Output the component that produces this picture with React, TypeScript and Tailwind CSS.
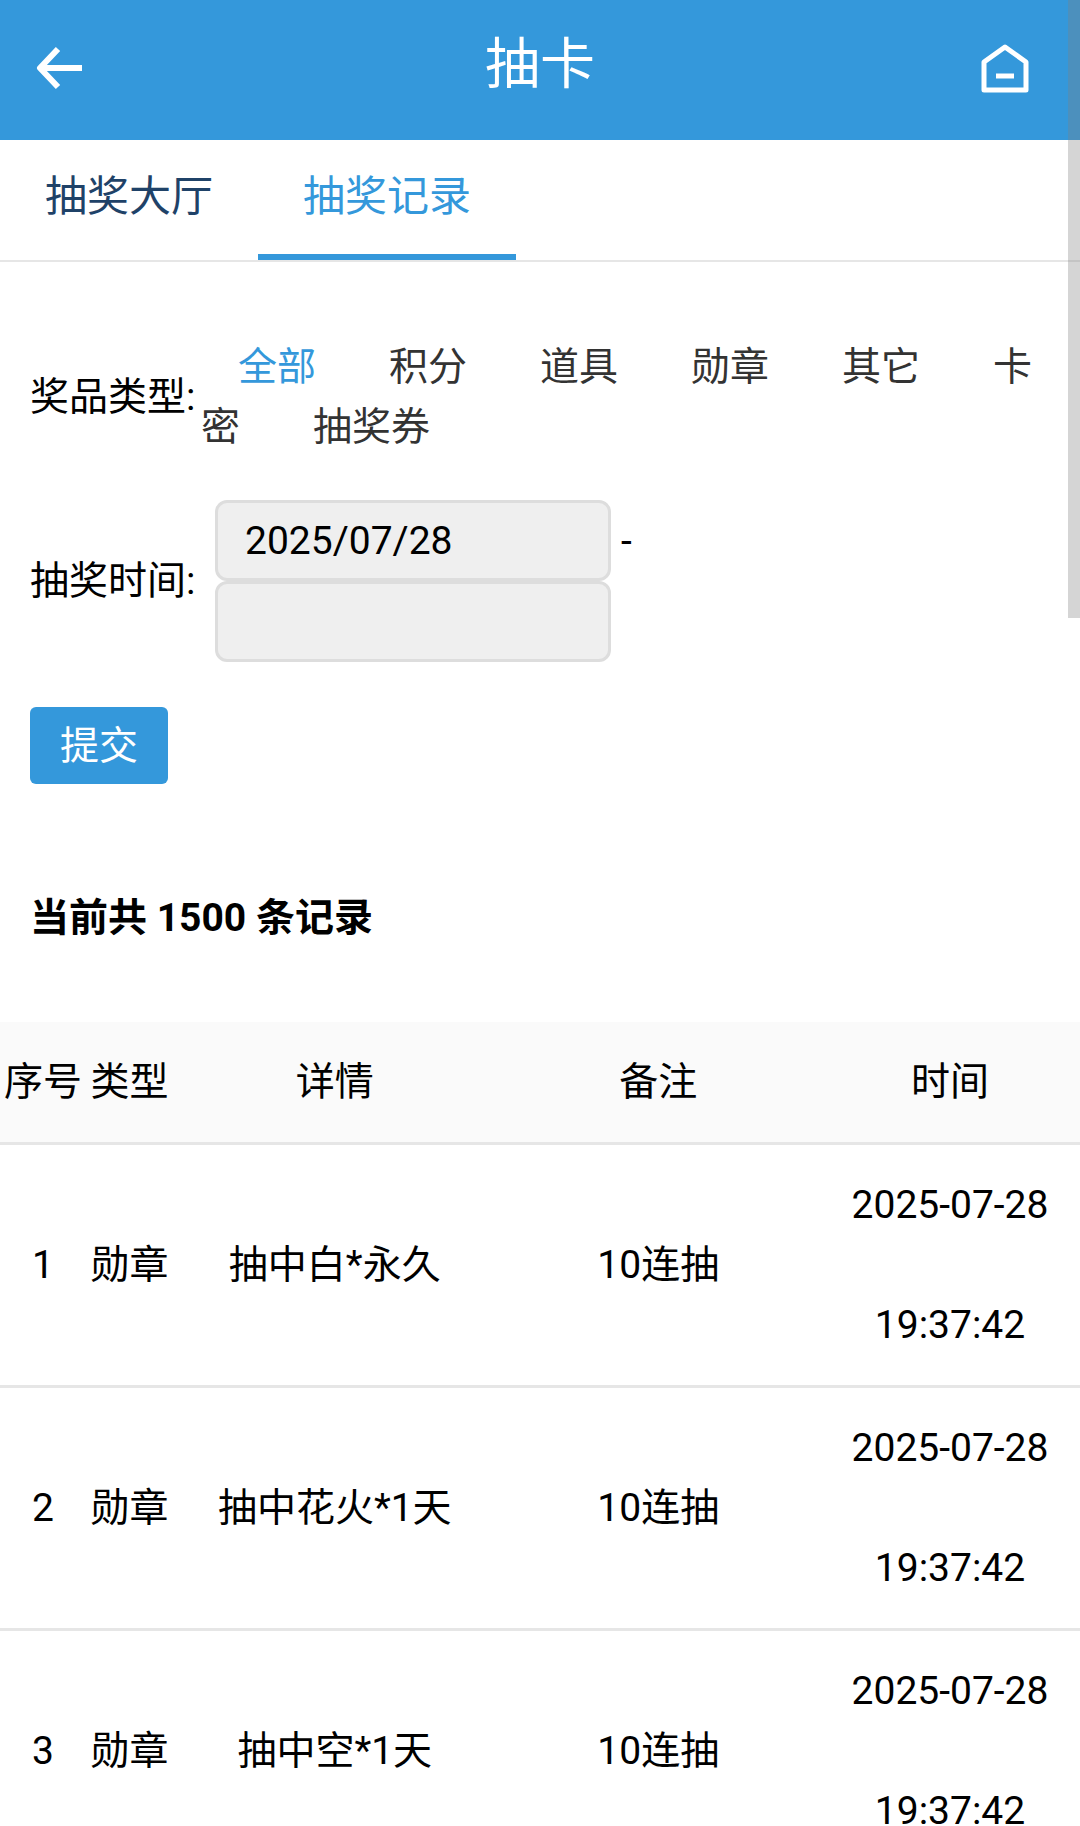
import { useState } from 'react';
import clsx from 'clsx';

const tabs = [
  { href: '#hall', title: '抽奖大厅' },
  { href: '#records', title: '抽奖记录' },
];

const prizeTypes = ['全部', '积分', '道具', '勋章', '其它', '卡密', '抽奖券'];

const records = [
  { id: 1, type: '勋章', detail: '抽中白*永久', note: '10连抽', date: '2025-07-28', time: '19:37:42' },
  { id: 2, type: '勋章', detail: '抽中花火*1天', note: '10连抽', date: '2025-07-28', time: '19:37:42' },
  { id: 3, type: '勋章', detail: '抽中空*1天', note: '10连抽', date: '2025-07-28', time: '19:37:42' },
];

const dateInput =
  'block h-[81px] w-[396px] rounded-xl border-3 border-[#dddddd] bg-[#efefef] px-[27px] text-[39px] text-black outline-none';

function BackIcon() {
  return (
    <svg width="50" height="48" viewBox="0 0 50 48" fill="none" stroke="currentColor" strokeWidth="6">
      <path d="M48 24H6M24 5L6 24l18 19" strokeLinejoin="round" />
    </svg>
  );
}

function HomeIcon() {
  return (
    <svg width="50" height="50" viewBox="0 0 50 50" fill="none" stroke="currentColor" strokeWidth="5">
      <path d="M4 19L25 4l21 15v28H4z" strokeLinejoin="round" />
      <path d="M16 33h18" />
    </svg>
  );
}

function Header() {
  return (
    <header className="grid h-[140px] grid-cols-[1fr_auto_1fr] items-center bg-[#3498db] px-[34px] pb-1 text-white">
      <a href="#back" aria-label="返回" className="justify-self-start">
        <BackIcon />
      </a>
      <h1 className="pb-2 text-[55px] leading-[80px]">抽卡</h1>
      <a href="#home" aria-label="首页" className="justify-self-end pr-4">
        <HomeIcon />
      </a>
    </header>
  );
}

function Filters() {
  const [type, setType] = useState('全部');

  return (
    <form className="px-[30px] pt-[75px]" onSubmit={(e) => e.preventDefault()}>
      <div className="flex items-center">
        <span className="w-[171px] shrink-0">奖品类型:</span>
        <div className="leading-[60px] text-[#333333]">
          {prizeTypes.map((item) => (
            <a
              key={item}
              href="#records"
              onClick={() => setType(item)}
              className={clsx('mr-9 ml-[37px]', item === type && 'text-[#3498db]')}
            >
              {item}
            </a>
          ))}
        </div>
      </div>

      <div className="mt-[43px] flex items-center">
        <label htmlFor="start" className="w-[185px] shrink-0">
          抽奖时间:
        </label>
        <div>
          <div className="flex items-center gap-[10px]">
            <input id="start" className={dateInput} defaultValue="2025/07/28" />
            <span>-</span>
          </div>
          <input aria-label="结束时间" className={dateInput} />
        </div>
      </div>

      <button type="submit" className="mt-[45px] block h-[77px] rounded-md bg-[#3498db] px-[30px] text-white">
        提交
      </button>
    </form>
  );
}

function RecordTable() {
  return (
    <table className="w-full table-fixed border-collapse text-center leading-[120px]">
      <colgroup>
        <col className="w-[86px]" />
        <col className="w-[87px]" />
        <col />
        <col />
        <col className="w-[260px]" />
      </colgroup>
      <thead>
        <tr className="border-b-3 border-[#e6e6e6] bg-[#fafafa]">
          {['序号', '类型', '详情', '备注', '时间'].map((title) => (
            <th key={title} className="p-0 font-normal">
              {title}
            </th>
          ))}
        </tr>
      </thead>
      <tbody>
        {records.map((row) => (
          <tr key={row.id} className="border-b-3 border-[#e6e6e6]">
            <td className="p-0">{row.id}</td>
            <td className="p-0">{row.type}</td>
            <td className="p-0">{row.detail}</td>
            <td className="p-0">{row.note}</td>
            <td className="p-0">
              {row.date}
              <br />
              {row.time}
            </td>
          </tr>
        ))}
      </tbody>
    </table>
  );
}

export default function App() {
  return (
    <div className="relative h-screen overflow-hidden bg-white font-[Roboto,'Noto_Sans_CJK_SC',sans-serif] text-[39px] leading-[60px] text-black">
      <main lang="zh-CN" className="h-full overflow-y-auto [scrollbar-width:none]">
        <Header />
        <nav className="flex border-b-2 border-[#e6e6e6] text-[42px] leading-[114px]">
          {tabs.map(({ href, title }, i) => (
            <a
              key={href}
              href={href}
              className={clsx(
                'border-b-6 px-[45px]',
                i === 1 ? 'border-[#3498db] text-[#3498db]' : 'border-transparent text-[#1f4268]'
              )}
            >
              {title}
            </a>
          ))}
        </nav>
        <Filters />
        <h2 className="mt-[104px] mb-[74px] px-[30px] font-bold">当前共 1500 条记录</h2>
        <RecordTable />
      </main>
      {/* scroll thumb */}
      <div className="absolute top-0 right-0 h-[618px] w-3 bg-[#80808054]" />
    </div>
  );
}
